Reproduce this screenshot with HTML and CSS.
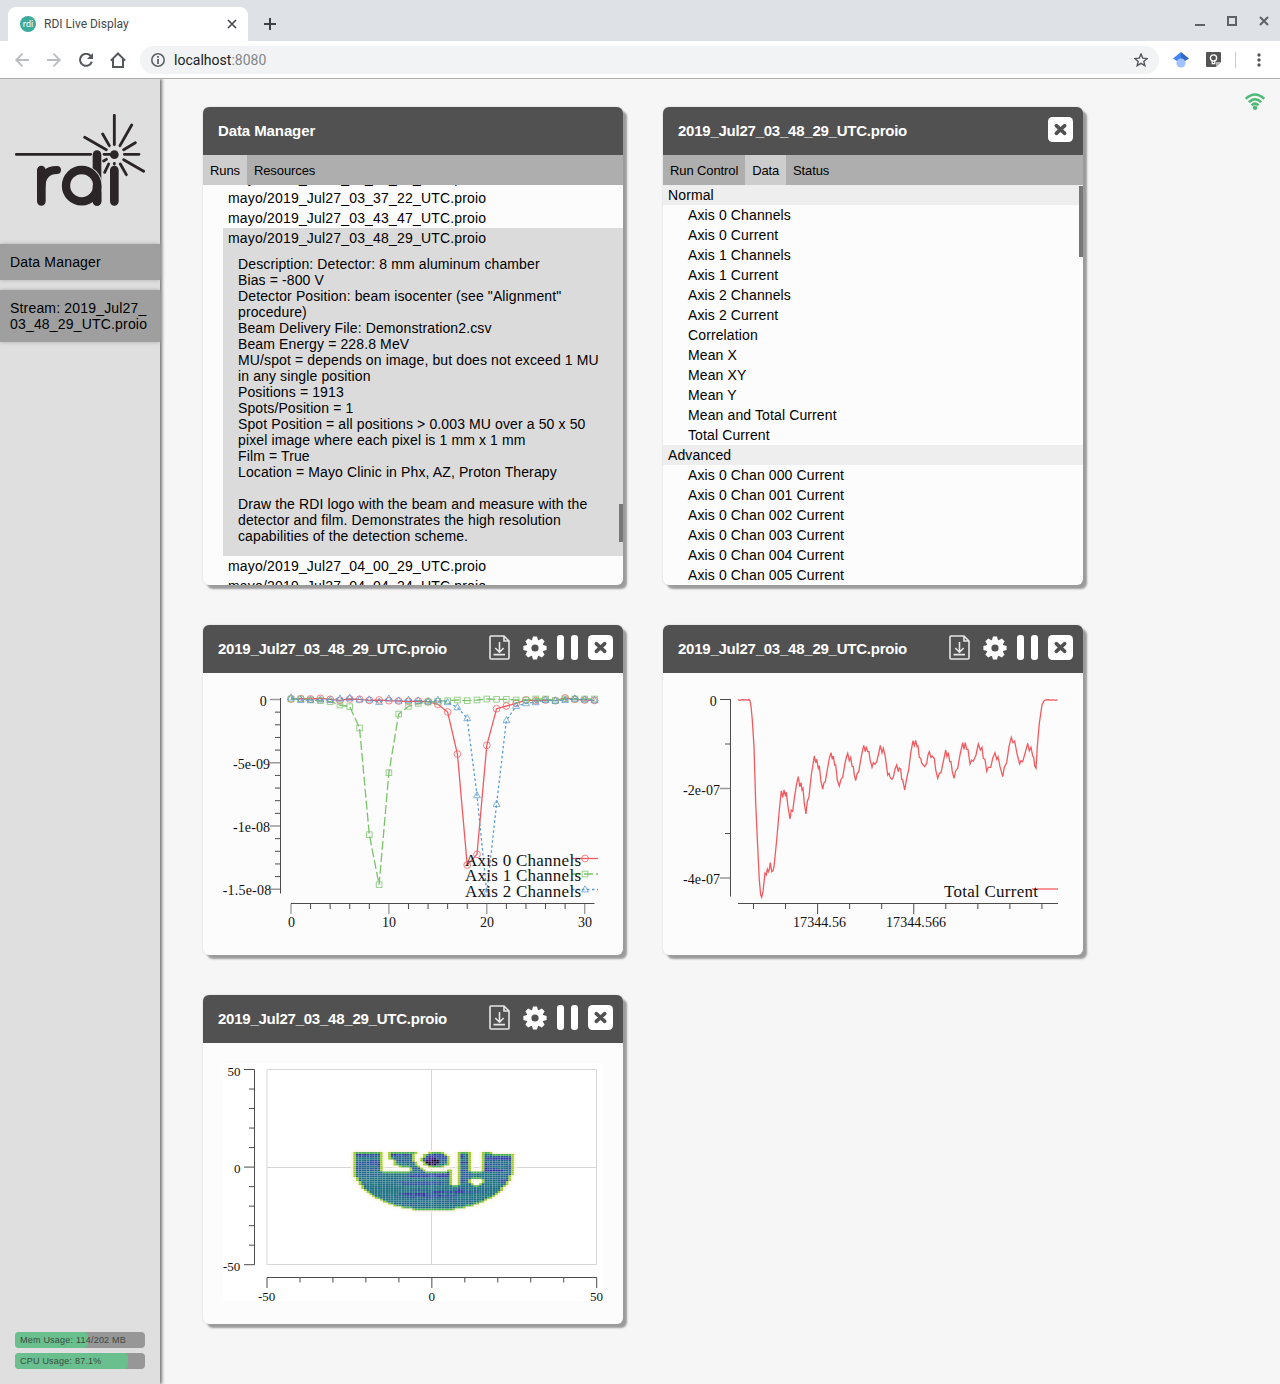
FILE: index.html
```html
<!DOCTYPE html>
<html lang="en">
<head>
<meta charset="utf-8">
<title>RDI Live Display</title>
<link rel="stylesheet" href="styles.css">
</head>
<body>
<svg width="0" height="0" class="defs">
  <symbol id="i-close" viewBox="0 0 25 25"><rect width="25" height="25" rx="4.5" fill="#fff"/><path d="M8.3 8.6l8.4 7.8M16.7 8.6l-8.4 7.8" stroke="#515151" stroke-width="3.6" stroke-linecap="round"/></symbol>
  <symbol id="i-pause" viewBox="0 0 21 25"><rect width="7" height="25" rx="3" fill="#fff"/><rect x="14" width="7" height="25" rx="3" fill="#fff"/></symbol>
  <symbol id="i-gear" viewBox="-12 -12 24 24"><g fill="#fff"><path id="teeth" d="M-3 -8L-2 -11.600H2L3 -8V8L2 11.600H-2L-3 8Z"/><path d="M-3 -8L-2 -11.600H2L3 -8V8L2 11.600H-2L-3 8Z" transform="rotate(45)"/><path d="M-3 -8L-2 -11.600H2L3 -8V8L2 11.600H-2L-3 8Z" transform="rotate(90)"/><path d="M-3 -8L-2 -11.600H2L3 -8V8L2 11.600H-2L-3 8Z" transform="rotate(135)"/><circle r="8.6"/></g><circle r="3.6" fill="#515151"/></symbol>
  <symbol id="i-save" viewBox="0 0 21 25"><path d="M1 2Q1 1 2 1H15L20 6V23Q20 24 19 24H2Q1 24 1 23ZM15 1V6H20M10.5 7V17M6.3 13l4.2 4.2 4.2-4.2M4.5 19.6H16" fill="none" stroke="#e6e6e6" stroke-width="1.6"/></symbol>
</svg>

<header class="browser">
  <div class="tabstrip">
    <div class="tab">
      <svg width="16" height="16"><circle cx="8" cy="8" r="8" fill="#3cab9b"/><text x="8" y="11" text-anchor="middle" class="favicon">rdi</text></svg>
      <span class="tab-title">RDI Live Display</span>
      <svg width="10" height="10"><path d="M1 1l8 8M9 1l-8 8" stroke="#46494d" stroke-width="1.7"/></svg>
    </div>
    <svg class="newtab" width="12" height="12"><path d="M6 0V12M0 6H12" stroke="#3c4043" stroke-width="2"/></svg>
    <div class="window-buttons">
      <svg width="10" height="10"><path d="M0 9H10" stroke="#5f6368" stroke-width="2"/></svg>
      <svg width="10" height="10"><rect x="1" y="1" width="8" height="8" fill="none" stroke="#5f6368" stroke-width="2"/></svg>
      <svg width="10" height="10"><path d="M1 1l8 8M9 1l-8 8" stroke="#5f6368" stroke-width="2"/></svg>
    </div>
  </div>
  <div class="toolbar">
    <svg width="14" height="14" fill="none" stroke="#babcbe" stroke-width="1.8"><path d="M14 7H1M7.5 .7L1.2 7l6.3 6.3"/></svg>
    <svg width="14" height="14" fill="none" stroke="#babcbe" stroke-width="1.8"><path d="M0 7H13M6.5 .7L12.8 7l-6.3 6.3"/></svg>
    <svg width="14" height="14" fill="none"><path d="M11.7 3A6 6 0 1 0 12.8 8.6" stroke="#54585d" stroke-width="2"/><path d="M14 0V6H8Z" fill="#54585d"/></svg>
    <svg class="home" width="16" height="16" fill="none" stroke="#54585d" stroke-width="2"><path d="M.8 8.600L8 1.500l7.200 7.100M3 7V15H13V7"/></svg>
    <div class="omnibox">
      <svg width="14" height="14"><circle cx="7" cy="7" r="6.2" fill="none" stroke="#5f6368" stroke-width="1.6"/><path d="M7 3V4.800M7 6V11" stroke="#5f6368" stroke-width="1.800"/></svg>
      <span class="url">localhost<span class="port">:8080</span></span>
      <svg width="14" height="14" viewBox="0 0 14 14"><path d="M7 1.100l1.750 4.050 4.400.400-3.350 2.850 1.050 4.300L7 10.400l-3.850 2.300 1.050-4.300L.85 5.550l4.400-.400Z" fill="none" stroke="#54585d" stroke-width="1.400"/></svg>
    </div>
    <svg class="ext" width="16" height="16"><circle cx="8" cy="11" r="4.600" fill="#a0c3ff"/><path d="M0 6.500L8 0V6.600Q5.500 6.600 4 9Z" fill="#4285f4"/><path d="M8 0l8 6.500L12 9Q10.500 6.600 8 6.600Z" fill="#356ac3"/></svg>
    <svg class="ext2" width="15" height="15"><path d="M1 0H14Q15 0 15 1V10L10 15H1Q0 15 0 14V1Q0 0 1 0Z" fill="#545454"/><path d="M15 10L10 15V10Z" fill="#b5b5b5"/><circle cx="7.500" cy="6" r="3.100" fill="none" stroke="#fff" stroke-width="1.300"/><path d="M6.200 8.800V11.600H8.800V8.800" fill="none" stroke="#fff" stroke-width="1.200"/></svg>
    <i class="sep"></i>
    <svg width="4" height="14" fill="#54585d"><circle cx="2" cy="2" r="1.700"/><circle cx="2" cy="7" r="1.700"/><circle cx="2" cy="12" r="1.700"/></svg>
  </div>
</header>

<div class="app">
  <aside class="sidebar">
    <svg class="logo" viewBox="45 72 390 276" fill="none" stroke="#2b2527" stroke-linecap="round">
      <path d="M49 193H272M312 193H340M343 76V164M395 105L360 167M406 158L371 179M373 193H417M371 209L431 244M361 222L379 254M343 220V222M326 222L314 247M319 208L311 213M254 142L319 179M308 132L328 167" stroke-width="8.500"/>
      <circle cx="343" cy="194" r="13" fill="#2b2527" stroke="none"/>
      <path d="M124 240V334M343 240V334" stroke-width="26"/>
      <path d="M124 290Q126 240 171 240" stroke-width="24"/>
      <path d="M291 194V334" stroke-width="26"/>
      <circle cx="245" cy="287" r="47" stroke="#dfdfdf" stroke-width="30"/>
      <path d="M291 290V334" stroke-width="26"/>
      <circle cx="245" cy="287" r="47" stroke-width="25"/>
    </svg>
    <nav>
      <div class="nav-item">Data Manager</div>
      <div class="nav-item">Stream: 2019_Jul27_<br>03_48_29_UTC.proio</div>
    </nav>
    <div class="meters">
      <div class="meter"><i style="width:56.400%"></i><span>Mem Usage: 114/202 MB</span></div>
      <div class="meter"><i style="width:87.100%"></i><span>CPU Usage: 87.1%</span></div>
    </div>
  </aside>

  <main>
    <svg class="wifi" width="20" height="17" fill="none" stroke="#4dba77" stroke-width="2.500"><path d="M.8 5.800Q10-2.800 19.200 5.800M3.800 9.200Q10 3.200 16.200 9.200M6.600 12.300Q10 9 13.400 12.300"/><circle cx="10" cy="14.700" r="2.200" fill="#4dba77" stroke="none"/></svg>

    <section class="panel tall">
      <div class="head"><h2 class="plain">Data Manager</h2></div>
      <div class="tabs"><span class="on">Runs</span><span>Resources</span></div>
      <div class="scroll">
        <div class="runs">
          <div class="row">mayo/2019_Jul27_03_36_12_UTC.proio</div>
          <div class="row">mayo/2019_Jul27_03_37_22_UTC.proio</div>
          <div class="row">mayo/2019_Jul27_03_43_47_UTC.proio</div>
          <div class="selected">
            <div class="row">mayo/2019_Jul27_03_48_29_UTC.proio</div>
            <p>Description: Detector: 8 mm aluminum chamber<br>Bias = -800 V<br>Detector Position: beam isocenter (see "Alignment"<br>procedure)<br>Beam Delivery File: Demonstration2.csv<br>Beam Energy = 228.8 MeV<br>MU/spot = depends on image, but does not exceed 1 MU<br>in any single position<br>Positions = 1913<br>Spots/Position = 1<br>Spot Position = all positions &gt; 0.003 MU over a 50 x 50<br>pixel image where each pixel is 1 mm x 1 mm<br>Film = True<br>Location = Mayo Clinic in Phx, AZ, Proton Therapy<br><br>Draw the RDI logo with the beam and measure with the<br>detector and film. Demonstrates the high resolution<br>capabilities of the detection scheme.</p>
          </div>
          <div class="row">mayo/2019_Jul27_04_00_29_UTC.proio</div>
          <div class="row">mayo/2019_Jul27_04_04_24_UTC.proio</div>
        </div>
        <i class="thumb low"></i>
      </div>
    </section>

    <section class="panel tall">
      <div class="head"><h2>2019_Jul27_03_48_29_UTC.proio</h2><svg width="25" height="25"><use href="#i-close"/></svg></div>
      <div class="tabs"><span>Run Control</span><span class="on">Data</span><span>Status</span></div>
      <div class="scroll">
        <div class="group">Normal</div>
        <div class="entries">
          <div>Axis 0 Channels</div><div>Axis 0 Current</div><div>Axis 1 Channels</div><div>Axis 1 Current</div><div>Axis 2 Channels</div><div>Axis 2 Current</div><div>Correlation</div><div>Mean X</div><div>Mean XY</div><div>Mean Y</div><div>Mean and Total Current</div><div>Total Current</div>
        </div>
        <div class="group">Advanced</div>
        <div class="entries">
          <div>Axis 0 Chan 000 Current</div><div>Axis 0 Chan 001 Current</div><div>Axis 0 Chan 002 Current</div><div>Axis 0 Chan 003 Current</div><div>Axis 0 Chan 004 Current</div><div>Axis 0 Chan 005 Current</div>
        </div>
        <i class="thumb high"></i>
      </div>
    </section>

    <section class="panel">
      <div class="head"><h2>2019_Jul27_03_48_29_UTC.proio</h2><svg width="21" height="25"><use href="#i-save"/></svg><svg class="gear" width="24" height="24"><use href="#i-gear"/></svg><svg class="pause" width="21" height="25"><use href="#i-pause"/></svg><svg class="close" width="25" height="25"><use href="#i-close"/></svg></div>
      <svg class="chart" id="channels" viewBox="203 673 420 282"></svg>
    </section>

    <section class="panel">
      <div class="head"><h2>2019_Jul27_03_48_29_UTC.proio</h2><svg width="21" height="25"><use href="#i-save"/></svg><svg class="gear" width="24" height="24"><use href="#i-gear"/></svg><svg class="pause" width="21" height="25"><use href="#i-pause"/></svg><svg class="close" width="25" height="25"><use href="#i-close"/></svg></div>
      <svg class="chart" id="current" viewBox="663 673 420 282"></svg>
    </section>

    <section class="panel">
      <div class="head"><h2>2019_Jul27_03_48_29_UTC.proio</h2><svg width="21" height="25"><use href="#i-save"/></svg><svg class="gear" width="24" height="24"><use href="#i-gear"/></svg><svg class="pause" width="21" height="25"><use href="#i-pause"/></svg><svg class="close" width="25" height="25"><use href="#i-close"/></svg></div>
      <svg class="chart" id="image" viewBox="203 1043 420 281"></svg>
    </section>
  </main>
</div>
<script src="charts.js"></script>
</body>
</html>
```
FILE: styles.css
```css
* { box-sizing: border-box; }
body { margin: 0; width: 1280px; height: 1384px; overflow: hidden; display: flex; flex-direction: column; background: #f6f6f6; font: 14px/16px "Liberation Sans", Arial, sans-serif; color: #000; }
svg { display: block; flex: none; }
.defs { position: absolute; }

.browser { flex: none; font-family: Roboto, sans-serif; border-bottom: 1px solid #adadad; }
.tabstrip { height: 41px; background: #dee1e6; display: flex; padding: 7px 11px 0 8px; }
.tab { width: 240px; height: 34px; background: #fff; border-radius: 8px 8px 0 0; display: flex; align-items: center; padding: 0 11px 0 12px; }
.tab-title { flex: 1; margin-left: 8px; font-size: 12px; color: #45484c; }
.favicon { font: 9px Lato, sans-serif; fill: #fff; }
.newtab { margin: 11px 0 0 16px; }
.window-buttons { margin: 9px 0 0 auto; display: flex; gap: 22px; }
.toolbar { height: 37px; background: #fff; display: flex; align-items: center; padding: 0 0 0 15px; gap: 18px; }
.home { margin-left: -1px; }
.omnibox { width: 1019px; height: 28px; margin-left: -4px; border-radius: 14px; background: #f1f3f4; display: flex; align-items: center; padding: 0 11px; }
.url { flex: 1; margin-left: 9px; font-size: 14px; letter-spacing: .02px; color: #202124; }
.port { color: #80868b; }
.ext { margin-left: -4px; }
.ext2 { margin-left: -1px; }
.sep { width: 1px; height: 16px; margin: 0 3px 0 -4px; background: #ccc; }

.app { flex: 1; min-height: 0; display: flex; }
.sidebar { width: 160px; background: #dfdfdf; box-shadow: 2px 0 3px #777; display: flex; flex-direction: column; z-index: 1; clip-path: inset(0 -6px 0 0); }
.logo { width: 130px; height: 92px; margin: 35px 15px 38px; }
nav { display: flex; flex-direction: column; gap: 10px; }
.nav-item { background: #9f9f9f; padding: 10px; white-space: nowrap; letter-spacing: .18px; box-shadow: 0 0 4px #aaa; }
.meters { margin: auto 15px 15px; display: flex; flex-direction: column; gap: 5px; }
.meter { height: 16px; border-radius: 4px; background: #979797; overflow: hidden; display: grid; font-size: 9px; color: #3c4a42; }
.meter i, .meter span { grid-area: 1 / 1; }
.meter i { background: #69bf8d; border-radius: 4px; }
.meter span { padding-left: 5px; letter-spacing: .22px; }

main { position: relative; flex: 1; display: grid; grid-template-columns: 420px 420px; grid-template-rows: 478px 330px 329px; gap: 40px; align-content: start; padding: 28px 0 0 43px; }
.wifi { position: absolute; left: 1085px; top: 14px; }
.panel { border-radius: 6px; background: #fcfcfc; box-shadow: 4px 4px 2px #9b9b9b, 0 0 2px #ccc; display: flex; flex-direction: column; }
.head { height: 48px; flex: none; display: flex; background: #515151; border-radius: 6px 6px 0 0; padding: 10px 10px 0 15px; }
h2 { margin: 5px auto 0 0; font-size: 15px; line-height: 18px; color: #fff; letter-spacing: -.24px; }
.plain { letter-spacing: -.1px; }
.gear { margin: 0 10px 0 13px; }
.head .gear { margin: .5px 10.5px 0 12.5px; }
.pause { margin-right: 10px; }
.tabs { height: 30px; flex: none; background: #aeaeae; display: flex; font-size: 13px; line-height: 31px; letter-spacing: -.1px; }
.tabs span { padding: 0 7px; }
.tabs .on { background: #cdcdcd; }
.tall + .tall .on { letter-spacing: -.2px; }
.scroll { position: relative; flex: 1; min-height: 0; overflow: hidden; border-radius: 0 0 6px 6px; letter-spacing: .12px; }
.runs { margin: -17px 0 0 20px; letter-spacing: .18px; }
.row { height: 20px; line-height: 20px; padding-left: 5px; }
.selected { background: #dbdbdb; }
.selected p { margin: 0; padding: 8px 0 12px 15px; white-space: nowrap; letter-spacing: .12px; }
.group { line-height: 20px; padding-left: 5px; background: #eee; }
.entries { line-height: 20px; padding-left: 25px; }
.thumb { position: absolute; right: 0; width: 4px; background: #777; }
.low { top: 319px; height: 38px; }
.high { top: 1px; height: 71px; }

.chart { width: 420px; flex: 1; font: 14px "Liberation Serif", "Times New Roman", serif; fill: #111; }
.axis { fill: none; stroke: #4c4c4c; stroke-width: 1; }
.major { fill: none; stroke: #999; stroke-width: 1.3; }
.legend { font-size: 17px; }
.red { fill: none; stroke: #f15a60; stroke-width: 1.3; }
.green { fill: none; stroke: #7ac36a; stroke-width: 1.3; stroke-dasharray: 9 3; }
.blue { fill: none; stroke: #5a9bd4; stroke-width: 1.3; stroke-dasharray: 2.5 2.5; }
.mark { stroke-dasharray: none; stroke-width: 1; opacity: .75; }
.frame { fill: none; stroke: #d6d6d6; }
.small { font-size: 13px; }
```
FILE: charts.js
```js
const text = (s, x, y, w, cls = '') =>
  `<text x="${x}" y="${y}" class="${cls}"${w ? ` textLength="${w}"` : ''}>${s}</text>`;
const path = (d, cls) => `<path d="${d}" class="${cls}"/>`;
const marks = {
  red: (x, y) => `<circle cx="${x}" cy="${y}" r="3.4" class="red mark"/>`,
  green: (x, y) => `<rect x="${x - 2.8}" y="${y - 2.8}" width="5.6" height="5.6" class="green mark"/>`,
  blue: (x, y) => path(`M${x} ${y - 3.8}L${x + 3.4} ${y + 2.4}H${x - 3.4}Z`, 'blue mark'),
};

/* Per-channel current on the three axes */
function drawChannels() {
  const series = {
    red: [57,56,57,55,58,61,57,58,61,60,62,63,64,63,65,73,96,222,555,523,196,86,78,70,60,62,60,62,54,58,60,61],
    green: [57,57,60,62,65,75,80,144,464,614,278,102,79,70,66,64,62,60,62,60,57,58,58,60,60,57,57,62,57,57,57,57],
    blue: [53,60,60,59,60,56,54,59,59,66,56,62,60,62,64,60,67,82,115,346,638,372,121,78,70,67,60,62,60,56,59,61],
  };
  let out = '';
  for (const [name, ys] of Object.entries(series)) {
    const pts = ys.map((y, i) => [291 + i * 9.79, 680 + y / 3]);
    out += path('M' + pts.map(p => p.join(' ')).join('L'), name);
    out += pts.map(p => marks[name](...p)).join('');
  }
  let minor = 'M280.5 698V893.5M291 903.5H594.500', major = '';
  for (let i = 0; i <= 15; i++) {
    const y = 699.5 + i * 12.65;
    if (i % 5) minor += `M275 ${y}H280.5`; else major += `M270 ${y}H280.5`;
  }
  for (let i = 0; i <= 15; i++) {
    const x = 291 + i * 19.58;
    if (i % 5) minor += `M${x} 903.5V909`; else major += `M${x} 903.5V914`;
  }
  out += path(major, 'major') + path(minor, 'axis');
  out += text('0', 259.7, 706) + text('-5e-09', 233, 769, 37) + text('-1e-08', 233, 832, 37) + text('-1.5e-08', 222.7, 895, 48.5);
  out += text('0', 288, 927) + text('10', 382, 927) + text('20', 480, 927) + text('30', 578, 927);
  out += path('M572 858.5H598', 'red') + path('M572 874H598', 'green') + path('M572 889.5H598', 'blue');
  out += marks.red(585, 858.5) + marks.green(585, 874) + marks.blue(585, 889.5);
  ['Axis 0 Channels', 'Axis 1 Channels', 'Axis 2 Channels'].forEach((s, i) => {
    out += text(s, 465, [866, 881, 897][i], 116, 'legend');
  });
  document.getElementById('channels').innerHTML = out;
}

/* Total current against time */
function drawCurrent() {
  const pts = '204,59 210,61 216,59 222,60 228,59 234,61 236,58 240,62 243,78 247,120 252,200 257,370 263,500 268,600 272,645 275,652 279,635 285,580 289,585 292,568 295,576 298,568 301,548 305,575 309,572 312,560 320,480 328,390 334,332 338,352 342,330 346,345 349,337 354,380 360,417 364,390 368,394 373,355 380,310 385,290 389,320 393,308 396,330 399,325 403,370 408,402 412,365 417,350 424,285 433,228 437,248 440,238 445,265 448,257 453,305 458,327 462,308 466,305 472,270 478,235 483,218 487,238 490,228 494,255 497,255 502,300 508,318 513,298 518,292 525,250 530,228 533,220 538,242 542,232 546,258 550,260 553,285 557,302 561,282 566,275 574,230 581,196 586,215 589,200 593,215 597,215 600,238 606,262 610,248 615,253 620,245 626,220 631,196 636,218 640,205 646,230 650,262 653,285 657,280 661,293 666,298 670,292 675,268 680,255 685,275 688,264 692,268 695,298 698,300 704,330 710,295 716,268 722,220 729,182 733,197 737,181 741,200 744,198 748,232 752,235 755,250 764,260 770,250 774,225 778,215 783,232 786,228 793,235 797,270 803,295 808,280 813,278 820,245 824,225 827,210 831,230 835,218 839,245 843,245 847,275 852,295 857,272 863,265 870,225 878,188 882,208 886,188 890,208 894,208 900,252 905,240 910,244 918,225 925,192 931,210 936,202 940,235 945,238 950,274 955,262 962,262 968,235 975,218 980,238 984,230 990,260 998,290 1003,262 1010,248 1017,200 1024,172 1029,188 1034,183 1039,210 1042,225 1049,252 1053,242 1058,245 1065,220 1073,190 1078,212 1083,202 1088,228 1091,232 1094,258 1098,265 1102,200 1108,130 1116,75 1122,62 1128,60 1136,59 1142,61 1148,59 1156,61 1162,60';
  const scaled = pts.split(' ').map(p => {
    const [x, y] = p.split(',');
    return (670 + x / 3).toFixed(1) + ' ' + (680 + y / 3).toFixed(1);
  });
  let out = path('M' + scaled.join('L'), 'red');
  let axis = 'M730.5 699V896.5M738 903.5H1058M720 699.5H730.5M725 744H730.5M725 833.5H730.5';
  for (let i = 0; i < 10; i++) axis += `M${753.5 + i * 32.05} 903.5V${i === 2 || i === 5 ? 914 : 909}`;
  out += path('M720 788.5H730.5M720 878H730.5', 'major') + path(axis, 'axis');
  out += text('0', 709.7, 706) + text('-2e-07', 683, 795, 37) + text('-4e-07', 683, 884, 37);
  out += text('17344.56', 793, 927, 53) + text('17344.566', 886, 927, 60);
  out += path('M1032 889H1058', 'red') + text('Total Current', 944, 897, 94, 'legend');
  document.getElementById('current').innerHTML = out;
}

/* Beam image: one cell per spot position */
const W = 8.03, H = 5.86;
const inEllipse = (x, y, cx, cy, rx, ry) => ((x - cx) / rx) ** 2 + ((y - cy) / ry) ** 2 < 1;
function filled(c, r) {
  const x = 40 + (c + .5) * W, y = 36 + (r + .5) * H;
  if (y < 36 || x < 40 || x > 521 || (x > 455 && y < 42)) return false;
  if (y > 80 && !inEllipse(x, y, 280, 80, 243, 134)) return false;
  if (x > 128 && x < 148 && y < 97) return false;
  if (x >= 148 && x < 212 && y < 97) {
    const floor = x < 160 ? 62 : x < 175 ? 76 : x < 198 ? 82 : 85;
    const ceiling = x < 168 ? 92 : 97;
    if (y > floor && y < ceiling) return false;
  }
  if (inEllipse(x, y, 288, 60, 45, 25)) return true;
  if (inEllipse(x, y, 290, 55, 64, 42)) return false;
  if (x > 334 && x < 355 && y < 133) return false;
  if (x > 396 && x < 422 && y < 97) return false;
  return !inEllipse(x, y, 410, 126, 16, 9);
}
function drawImage() {
  let seed = 7;
  const rnd = () => (seed = (seed * 16807) % 2147483647) / 2147483647;
  const mix = ['#16707a', '#1b6c80', '#217583', '#26628e', '#2f4f9f', '#3330a0'];
  let out = '<rect x="223" y="1063" width="380" height="238" fill="#fff"/>';
  let cells = '';
  for (let r = -1; r < 32; r++) {
    let tone = rnd() * 3;
    for (let c = -1; c < 61; c++) {
      if (rnd() < .13) tone = rnd() * 4;
      const side = !filled(c - 1, r) || !filled(c + 1, r);
      const cap = !filled(c, r - 1) || !filled(c, r + 1);
      const near = filled(c - 1, r) || filled(c + 1, r) || filled(c, r - 1) || filled(c, r + 1);
      const x = 40 + c * W, y = 36 + r * H;
      let color;
      if (!filled(c, r)) { if (!near) continue; color = '#fff5e6'; }
      else if (side) color = '#9dcb22';
      else if (cap) color = '#48ae4c';
      else if (inEllipse(x, y, 270, 64, 22, 12)) color = rnd() < .5 ? '#13052b' : '#3b147f';
      else {
        const blue = y < 90 ? 1.5 : inEllipse(x, y, 270, 135, 110, 45) ? 1.4 : .2;
        color = mix[Math.min(5, Math.floor(tone * .8 + blue + rnd()))];
      }
      cells += `<rect x="${(340 + x / 3).toFixed(2)}" y="${(1140 + y / 3).toFixed(2)}" width="2.58" height="1.86" fill="${color}"/>`;
    }
  }
  out += path('M267 1069.5H596.5V1264.5H267ZM431.5 1069.5V1264.5M267 1167.5H596.5', 'frame') + cells;
  out += '<path d="M431.5 1152V1211" stroke="#ddd" stroke-opacity=".4"/>';
  let axis = 'M254.500 1069.5V1264.7M267 1277.5H596.7';
  for (let i = 0; i <= 10; i++) {
    const y = 1069.5 + i * 19.52, x = 267 + i * 32.97, big = i % 5 === 0;
    axis += `M${big ? 244 : 249} ${y}H254.5M${x} 1277.5V${big ? 1288 : 1282.5}`;
  }
  out += path(axis, 'axis');
  out += text('50', 227.5, 1076, 0, 'small') + text('0', 234, 1173, 0, 'small') + text('-50', 223, 1271, 0, 'small');
  out += text('-50', 258, 1301, 0, 'small') + text('0', 428.5, 1301, 0, 'small') + text('50', 590, 1301, 0, 'small');
  document.getElementById('image').innerHTML = out;
}

drawChannels();
drawCurrent();
drawImage();
```
